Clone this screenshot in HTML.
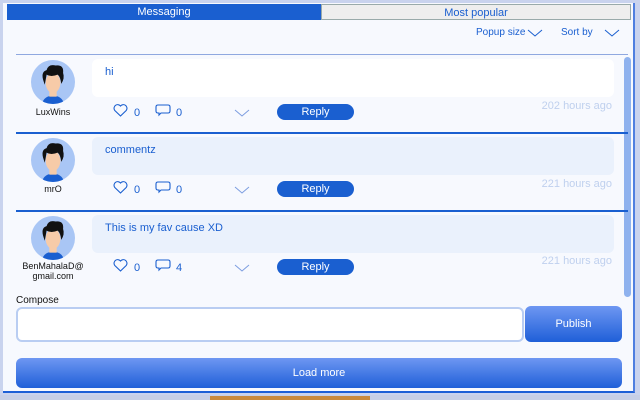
<!DOCTYPE html>
<html><head><meta charset="utf-8"><style>
*{margin:0;padding:0;box-sizing:border-box}
body{width:640px;height:400px;overflow:hidden;background:#c9d3ee;font-family:"Liberation Sans",sans-serif;position:relative}
.win{position:absolute;left:3px;top:3px;width:632px;height:390px;background:#f7f9fe;border-right:2px solid #4f7fe0;border-bottom:2px solid #1c5fd6}
.abs{position:absolute}
.tab{position:absolute;top:1px;height:16px;font-size:11px;text-align:center;line-height:16px}
.sep{position:absolute;left:13px;width:612px;height:2px;background:#1a5fd0}
.bub{position:absolute;left:89px;width:522px;height:38px;border-radius:6px;font-size:11px;color:#1a5fd0;padding:7px 13px}
.av{position:absolute;left:28px;width:44px;height:44px;border-radius:50%;background:#a9c6f5;overflow:hidden}
.name{position:absolute;left:10px;width:80px;text-align:center;font-size:9px;color:#111;line-height:10px}
.cnt{position:absolute;font-size:11px;color:#1a5fd0}
.reply{position:absolute;left:274px;width:77px;height:16px;border-radius:8px;background:#1a5fd0;color:#fff;font-size:11px;text-align:center;line-height:16px}
.time{position:absolute;right:21px;font-size:11px;color:#bfd0ee}
</style></head><body>
<div class="win">
<div class="tab" style="left:4px;width:314px;background:#1a5fd0;color:#fff">Messaging</div>
<div class="tab" style="left:318px;width:310px;background:#eeeeee;color:#1a5fd0;border:1px solid #9aa;">Most popular</div>
<div class="abs" style="left:473px;top:24px;font-size:10px;color:#1a5fd0">Popup size</div>
<svg class="abs" style="left:524px;top:26px" width="16" height="8"><path d="M1 1L8 7L15 1" fill="none" stroke="#1a5fd0" stroke-width="1"/></svg>
<div class="abs" style="left:558px;top:24px;font-size:10px;color:#1a5fd0">Sort by</div>
<svg class="abs" style="left:601px;top:26px" width="16" height="8"><path d="M1 1L8 7L15 1" fill="none" stroke="#1a5fd0" stroke-width="1"/></svg>
<div class="sep" style="top:51px;height:1px;background:#8fa8e0"></div>
<div class="abs" style="left:621px;top:54px;width:7px;height:240px;border-radius:4px;background:#8fb2ee"></div>

<!-- post 1 -->
<div class="bub" style="top:56px;background:#fff">hi</div>
<div class="av" style="top:57px"><svg width="44" height="44" viewBox="0 0 48 48"><path d="M12 48Q14 39 24 39Q34 39 36 48Z" fill="#1a5fd0"/><rect x="20" y="30" width="8" height="10" fill="#f7cba8"/><ellipse cx="24" cy="25" rx="8" ry="11" fill="#f7cba8"/><path d="M14 24Q10 13 17 11Q19 4 27 6Q36 5 35 14Q37 20 33 26Q32 18 29 16Q22 19 17 16Q16 22 15 27Z" fill="#111"/></svg></div>
<div class="name" style="top:104px">LuxWins</div>
<svg class="abs" style="left:110px;top:101px" width="15" height="13"><path d="M7.5 12L1.8 6.5A3.3 3.3 0 0 1 7.5 2A3.3 3.3 0 0 1 13.2 6.5Z" fill="none" stroke="#1a5fd0" stroke-width="1.1"/></svg>
<div class="cnt" style="left:131px;top:104px">0</div>
<svg class="abs" style="left:152px;top:101px" width="16" height="13"><path d="M3 1H13Q15 1 15 3V7Q15 9 13 9H6L4 11V9H3Q1 9 1 7V3Q1 1 3 1Z" fill="none" stroke="#1a5fd0" stroke-width="1.1"/></svg>
<div class="cnt" style="left:173px;top:104px">0</div>
<svg class="abs" style="left:231px;top:106px" width="16" height="8"><path d="M1 1L8 7L15 1" fill="none" stroke="#7c9de0" stroke-width="1"/></svg>
<div class="reply" style="top:101px">Reply</div>
<div class="time" style="top:97px">202 hours ago</div>

<!-- post 2 -->
<div class="sep" style="top:129px"></div>
<div class="bub" style="top:134px;background:#eaf1fc">commentz</div>
<div class="av" style="top:135px"><svg width="44" height="44" viewBox="0 0 48 48"><path d="M12 48Q14 39 24 39Q34 39 36 48Z" fill="#1a5fd0"/><rect x="20" y="30" width="8" height="10" fill="#f7cba8"/><ellipse cx="24" cy="25" rx="8" ry="11" fill="#f7cba8"/><path d="M14 24Q10 13 17 11Q19 4 27 6Q36 5 35 14Q37 20 33 26Q32 18 29 16Q22 19 17 16Q16 22 15 27Z" fill="#111"/></svg></div>
<div class="name" style="top:181px">mrO</div>
<svg class="abs" style="left:110px;top:178px" width="15" height="13"><path d="M7.5 12L1.8 6.5A3.3 3.3 0 0 1 7.5 2A3.3 3.3 0 0 1 13.2 6.5Z" fill="none" stroke="#1a5fd0" stroke-width="1.1"/></svg>
<div class="cnt" style="left:131px;top:181px">0</div>
<svg class="abs" style="left:152px;top:178px" width="16" height="13"><path d="M3 1H13Q15 1 15 3V7Q15 9 13 9H6L4 11V9H3Q1 9 1 7V3Q1 1 3 1Z" fill="none" stroke="#1a5fd0" stroke-width="1.1"/></svg>
<div class="cnt" style="left:173px;top:181px">0</div>
<svg class="abs" style="left:231px;top:183px" width="16" height="8"><path d="M1 1L8 7L15 1" fill="none" stroke="#7c9de0" stroke-width="1"/></svg>
<div class="reply" style="top:178px">Reply</div>
<div class="time" style="top:175px">221 hours ago</div>

<!-- post 3 -->
<div class="sep" style="top:207px"></div>
<div class="bub" style="top:212px;background:#eaf1fc">This is my fav cause XD</div>
<div class="av" style="top:213px"><svg width="44" height="44" viewBox="0 0 48 48"><path d="M12 48Q14 39 24 39Q34 39 36 48Z" fill="#1a5fd0"/><rect x="20" y="30" width="8" height="10" fill="#f7cba8"/><ellipse cx="24" cy="25" rx="8" ry="11" fill="#f7cba8"/><path d="M14 24Q10 13 17 11Q19 4 27 6Q36 5 35 14Q37 20 33 26Q32 18 29 16Q22 19 17 16Q16 22 15 27Z" fill="#111"/></svg></div>
<div class="name" style="top:258px">BenMahalaD@<br>gmail.com</div>
<svg class="abs" style="left:110px;top:256px" width="15" height="13"><path d="M7.5 12L1.8 6.5A3.3 3.3 0 0 1 7.5 2A3.3 3.3 0 0 1 13.2 6.5Z" fill="none" stroke="#1a5fd0" stroke-width="1.1"/></svg>
<div class="cnt" style="left:131px;top:259px">0</div>
<svg class="abs" style="left:152px;top:256px" width="16" height="13"><path d="M3 1H13Q15 1 15 3V7Q15 9 13 9H6L4 11V9H3Q1 9 1 7V3Q1 1 3 1Z" fill="none" stroke="#1a5fd0" stroke-width="1.1"/></svg>
<div class="cnt" style="left:173px;top:259px">4</div>
<svg class="abs" style="left:231px;top:261px" width="16" height="8"><path d="M1 1L8 7L15 1" fill="none" stroke="#7c9de0" stroke-width="1"/></svg>
<div class="reply" style="top:256px">Reply</div>
<div class="time" style="top:252px">221 hours ago</div>

<div class="abs" style="left:13px;top:292px;font-size:10px;color:#111">Compose</div>
<div class="abs" style="left:13px;top:304px;width:508px;height:35px;background:#fff;border:2px solid #b9cdf2;border-radius:6px"></div>
<div class="abs" style="left:522px;top:303px;width:97px;height:36px;border-radius:6px;background:linear-gradient(#6e97f2,#1f5fd8);color:#fff;font-size:11px;text-align:center;line-height:36px">Publish</div>
<div class="abs" style="left:13px;top:355px;width:606px;height:30px;border-radius:6px;background:linear-gradient(#6e97f2,#1f5fd8);color:#fff;font-size:11px;text-align:center;line-height:30px">Load more</div>
</div>
<div class="abs" style="left:0;top:395px;width:640px;height:5px;background:#c6cfe6"></div>
<div class="abs" style="left:210px;top:396px;width:160px;height:4px;background:#c98a3c"></div>
</body></html>
